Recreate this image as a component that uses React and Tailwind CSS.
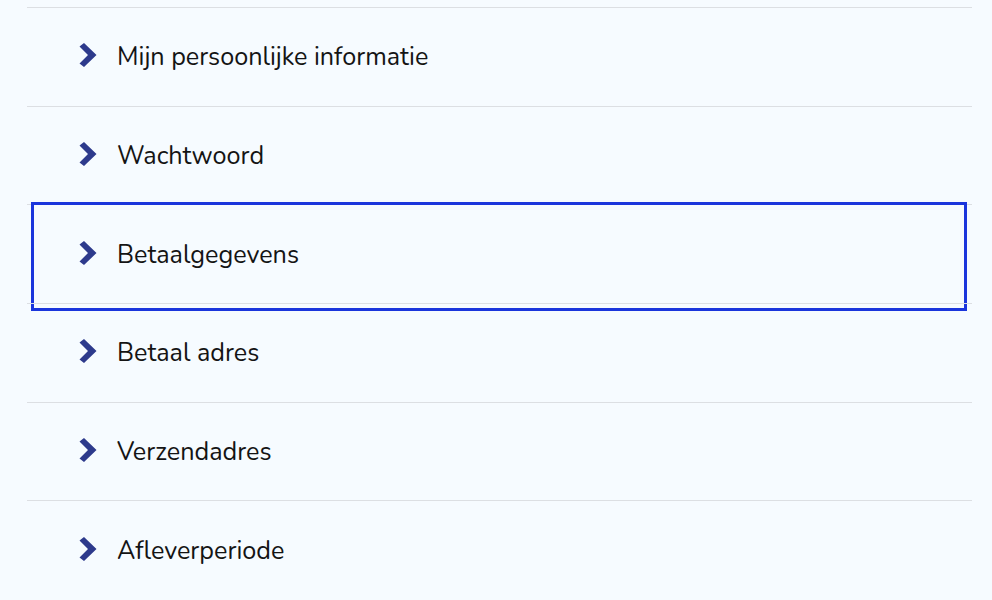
const items = [
  "Mijn persoonlijke informatie",
  "Wachtwoord",
  "Betaalgegevens",
  "Betaal adres",
  "Verzendadres",
  "Afleverperiode",
];

function Chevron() {
  return (
    <svg width="18" height="24" viewBox="0 0 18 24" className="mb-[3px] shrink-0">
      <polygon points="0.5,3.5 5,0 17.5,12 5,24 0.5,20.5 9,12" fill="#2d3a8c" />
    </svg>
  );
}

export default function App() {
  return (
    <div
      className="min-h-[600px] overflow-hidden bg-[#f6fbff] pt-[7px]"
      style={{ fontFamily: "Nunito, Lato, 'Open Sans', sans-serif" }}
    >
      <ul className="ml-[27px] mr-[20px]">
        {items.map((label, i) => (
          <li key={label} className="relative border-t border-[#dcdfe3]">
            <button className="flex h-[97.7px] w-full items-center gap-[20px] pl-[52px] text-left">
              <Chevron />
              <span className="mt-[2px] text-[25.2px] leading-none text-[#141414]">{label}</span>
            </button>
            {i === 2 && (
              <div className="pointer-events-none absolute left-[4px] right-[5px] top-[-3px] bottom-[-8px] border-[3px] border-[#1a35dc]" />
            )}
          </li>
        ))}
      </ul>
    </div>
  );
}
